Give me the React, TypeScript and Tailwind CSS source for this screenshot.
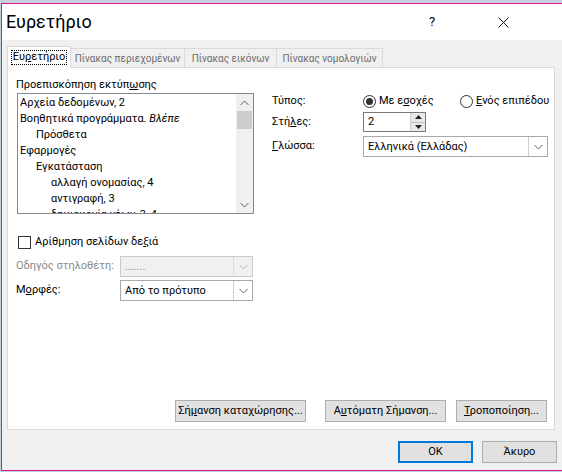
import React from 'react';

const FONT = { fontFamily: 'Roboto, "Noto Sans", sans-serif' };

const Chevron: React.FC<{ up?: boolean; color?: string }> = ({ up, color = '#606060' }) => (
  <svg width="9" height="6" viewBox="0 0 9 6">
    <path d={up ? 'M0.5 5 L4.5 1 L8.5 5' : 'M0.5 1 L4.5 5 L8.5 1'} fill="none" stroke={color} strokeWidth="1" />
  </svg>
);

const Combo: React.FC<{ text: string; width: string; disabled?: boolean }> = ({ text, width, disabled }) => (
  <div
    className={`flex h-[21px] ${width} border ${
      disabled ? 'border-[#cccccc] bg-[#f0f0f0] text-[#8a8a8a]' : 'border-[#a9a9a9] bg-white text-black'
    }`}
  >
    <div className="flex-1 flex items-center pl-[4px] leading-none whitespace-nowrap">{text}</div>
    <div
      className={`w-[19px] flex items-center justify-center border-l ${
        disabled ? 'border-[#dcdcdc]' : 'border-[#d0d0d0]'
      }`}
    >
      <Chevron color={disabled ? '#b5b5b5' : '#606060'} />
    </div>
  </div>
);

const Radio: React.FC<{ checked?: boolean; children: React.ReactNode }> = ({ checked, children }) => (
  <div className="flex items-center gap-[3px] whitespace-nowrap">
    <div className="w-[13px] h-[13px] rounded-full border border-[#333333] bg-white flex items-center justify-center">
      {checked && <div className="w-[7px] h-[7px] rounded-full bg-[#333333]" />}
    </div>
    <span>{children}</span>
  </div>
);

const Btn: React.FC<{ children: React.ReactNode; width: string; primary?: boolean }> = ({ children, width, primary }) => (
  <div
    className={`h-[22px] ${width} flex items-center justify-center bg-[#e1e1e1] ${
      primary ? 'border-2 border-[#0078d7]' : 'border border-[#adadad]'
    }`}
  >
    <span className="whitespace-nowrap">{children}</span>
  </div>
);

const entries: { text: React.ReactNode; indent: number }[] = [
  { text: 'Αρχεία δεδομένων, 2', indent: 0 },
  { text: <>Βοηθητικά προγράμματα. <i>Βλέπε</i></>, indent: 0 },
  { text: 'Πρόσθετα', indent: 1 },
  { text: 'Εφαρμογές', indent: 0 },
  { text: 'Εγκατάσταση', indent: 1 },
  { text: 'αλλαγή ονομασίας, 4', indent: 2 },
  { text: 'αντιγραφή, 3', indent: 2 },
  { text: 'δημιουργία νέων, 3, 4', indent: 2 },
];

const tabs = ['Πίνακας περιεχομένων', 'Πίνακας εικόνων', 'Πίνακας νομολογιών'];
const tabW = ['w-[114px]', 'w-[92px]', 'w-[106px]'];

export default function App() {
  return (
    <div className="w-[562px] h-[472px] overflow-hidden bg-[#c3d1dd] text-[11px] text-black" style={FONT}>
      <div className="h-[3px]" />
      <div className="ml-[1px] w-[600px] h-[468px] border-l border-t border-b border-[#e0168e] flex flex-col">
        {/* title bar */}
        <div className="h-[36px] bg-white flex items-center">
          <div className="pl-[4px] text-[18px] leading-none w-[420px] pb-[1px]">Ευρετήριο</div>
          <div className="w-[16px] text-[13px] text-center ml-[2px]">?</div>
          <div className="ml-[58px] flex items-center">
            <svg width="11" height="11" viewBox="0 0 11 11">
              <path d="M0.5 0.5 L10.5 10.5 M10.5 0.5 L0.5 10.5" stroke="#111" strokeWidth="1" />
            </svg>
          </div>
        </div>

        {/* body */}
        <div className="flex-1 bg-[#f0f0f0] pl-[5px] pt-[6px]">
          {/* tabs */}
          <div className="flex items-end h-[21px] relative z-10">
            <div className="w-[64px] h-[22px] -mb-px bg-white border-l border-t border-r border-[#d9d9d9] flex items-center justify-center">
              <span className="border border-dotted border-black px-[1px] leading-[12px] pb-[1px] whitespace-nowrap">
                Ευ<u>ρ</u>ετήριο
              </span>
            </div>
            {tabs.map((t, i) => (
              <div
                key={t}
                className={`${tabW[i]} h-[19px] border-t border-r border-[#d9d9d9] bg-[#f0f0f0] text-[#6d6d6d] text-[10px] flex items-center justify-center whitespace-nowrap`}
              >
                {t}
              </div>
            ))}
          </div>

          {/* panel */}
          <div className="w-[548px] h-[363px] bg-white border border-[#d9d9d9] flex flex-col pl-[8px]">
            <div className="flex">
              {/* left column */}
              <div className="flex flex-col w-[238px]">
                <div className="mt-[9px] h-[16px] leading-[16px] whitespace-nowrap">
                  Προεπισκόπηση εκτύπ<u>ω</u>σης
                </div>
                <div className="ml-[1px] w-[237px] h-[121px] border border-[#828790] flex">
                  <div className="flex-1 overflow-hidden pt-[1px]">
                    {entries.map((e, i) => (
                      <div
                        key={i}
                        className={`h-[16px] leading-[16px] whitespace-nowrap ${
                          e.indent === 0 ? 'pl-[2px]' : e.indent === 1 ? 'pl-[18px]' : 'pl-[33px]'
                        }`}
                      >
                        {e.text}
                      </div>
                    ))}
                  </div>
                  <div className="w-[17px] bg-[#f0f0f0] flex flex-col items-center">
                    <div className="h-[17px] flex items-center justify-center">
                      <Chevron up />
                    </div>
                    <div className="w-[15px] h-[18px] bg-[#cdcdcd]" />
                    <div className="flex-1" />
                    <div className="h-[17px] flex items-center justify-center">
                      <Chevron />
                    </div>
                  </div>
                </div>
              </div>

              {/* right column */}
              <div className="ml-[18px] pt-[25px] flex flex-col">
                <div className="flex items-center h-[16px]">
                  <div className="w-[91px]">Τύπος:</div>
                  <div className="w-[97px]">
                    <Radio checked>
                      Με ε<u>σ</u>οχές
                    </Radio>
                  </div>
                  <Radio>
                    <u>Ε</u>νός επιπέδου
                  </Radio>
                </div>
                <div className="flex items-center h-[20px] mt-[3px]">
                  <div className="w-[91px] whitespace-nowrap">
                    Στή<u>λ</u>ες:
                  </div>
                  <div className="w-[63px] h-[20px] border border-[#7a7a7a] bg-white flex">
                    <div className="flex-1 pl-[4px] flex items-center">2</div>
                    <div className="w-[15px] flex flex-col border-l border-[#cfcfcf]">
                      <div className="flex-1 bg-[#e8e8e8] border-b border-[#bdbdbd] flex items-center justify-center">
                        <svg width="7" height="4" viewBox="0 0 7 4">
                          <path d="M0 4 L3.5 0 L7 4 Z" fill="#222" />
                        </svg>
                      </div>
                      <div className="flex-1 bg-[#e8e8e8] flex items-center justify-center">
                        <svg width="7" height="4" viewBox="0 0 7 4">
                          <path d="M0 0 L3.5 4 L7 0 Z" fill="#222" />
                        </svg>
                      </div>
                    </div>
                  </div>
                </div>
                <div className="flex items-center h-[21px] mt-[4px]">
                  <div className="w-[91px] whitespace-nowrap">
                    <u>Γ</u>λώσσα:
                  </div>
                  <Combo text="Ελληνικά (Ελλάδας)" width="w-[185px]" />
                </div>
              </div>
            </div>

            {/* bottom-left options */}
            <div className="mt-[22px] flex items-center h-[13px]">
              <div className="ml-[2px] w-[13px] h-[13px] border border-[#333333] bg-white" />
              <span className="ml-[4px] whitespace-nowrap">
                Αρίθμηση σελίδων δε<u>ξ</u>ιά
              </span>
            </div>
            <div className="mt-[7px] flex items-center h-[21px]">
              <div className="w-[104px] text-[#8a8a8a] whitespace-nowrap">Οδηγός στηλοθέτη:</div>
              <Combo text="......." width="w-[133px]" disabled />
            </div>
            <div className="mt-[3px] flex items-center h-[21px]">
              <div className="w-[104px] whitespace-nowrap">
                Μ<u>ο</u>ρφές:
              </div>
              <Combo text="Από το πρότυπο" width="w-[133px]" />
            </div>

            <div className="flex-1" />
            <div className="flex mb-[7px] pl-[159px]">
              <Btn width="w-[131px]">
                Σή<u>μ</u>ανση καταχώρησης...
              </Btn>
              <div className="ml-[19px]">
                <Btn width="w-[121px]">
                  Α<u>υ</u>τόματη Σήμανση...
                </Btn>
              </div>
              <div className="ml-[10px]">
                <Btn width="w-[91px]">
                  <u>Τ</u>ροποποίηση...
                </Btn>
              </div>
            </div>
          </div>

          {/* dialog buttons */}
          <div className="flex mt-[11px] pl-[391px]">
            <Btn width="w-[75px]" primary>
              OK
            </Btn>
            <div className="ml-[9px]">
              <Btn width="w-[75px]">Άκυρο</Btn>
            </div>
          </div>
        </div>
      </div>
    </div>
  );
}
